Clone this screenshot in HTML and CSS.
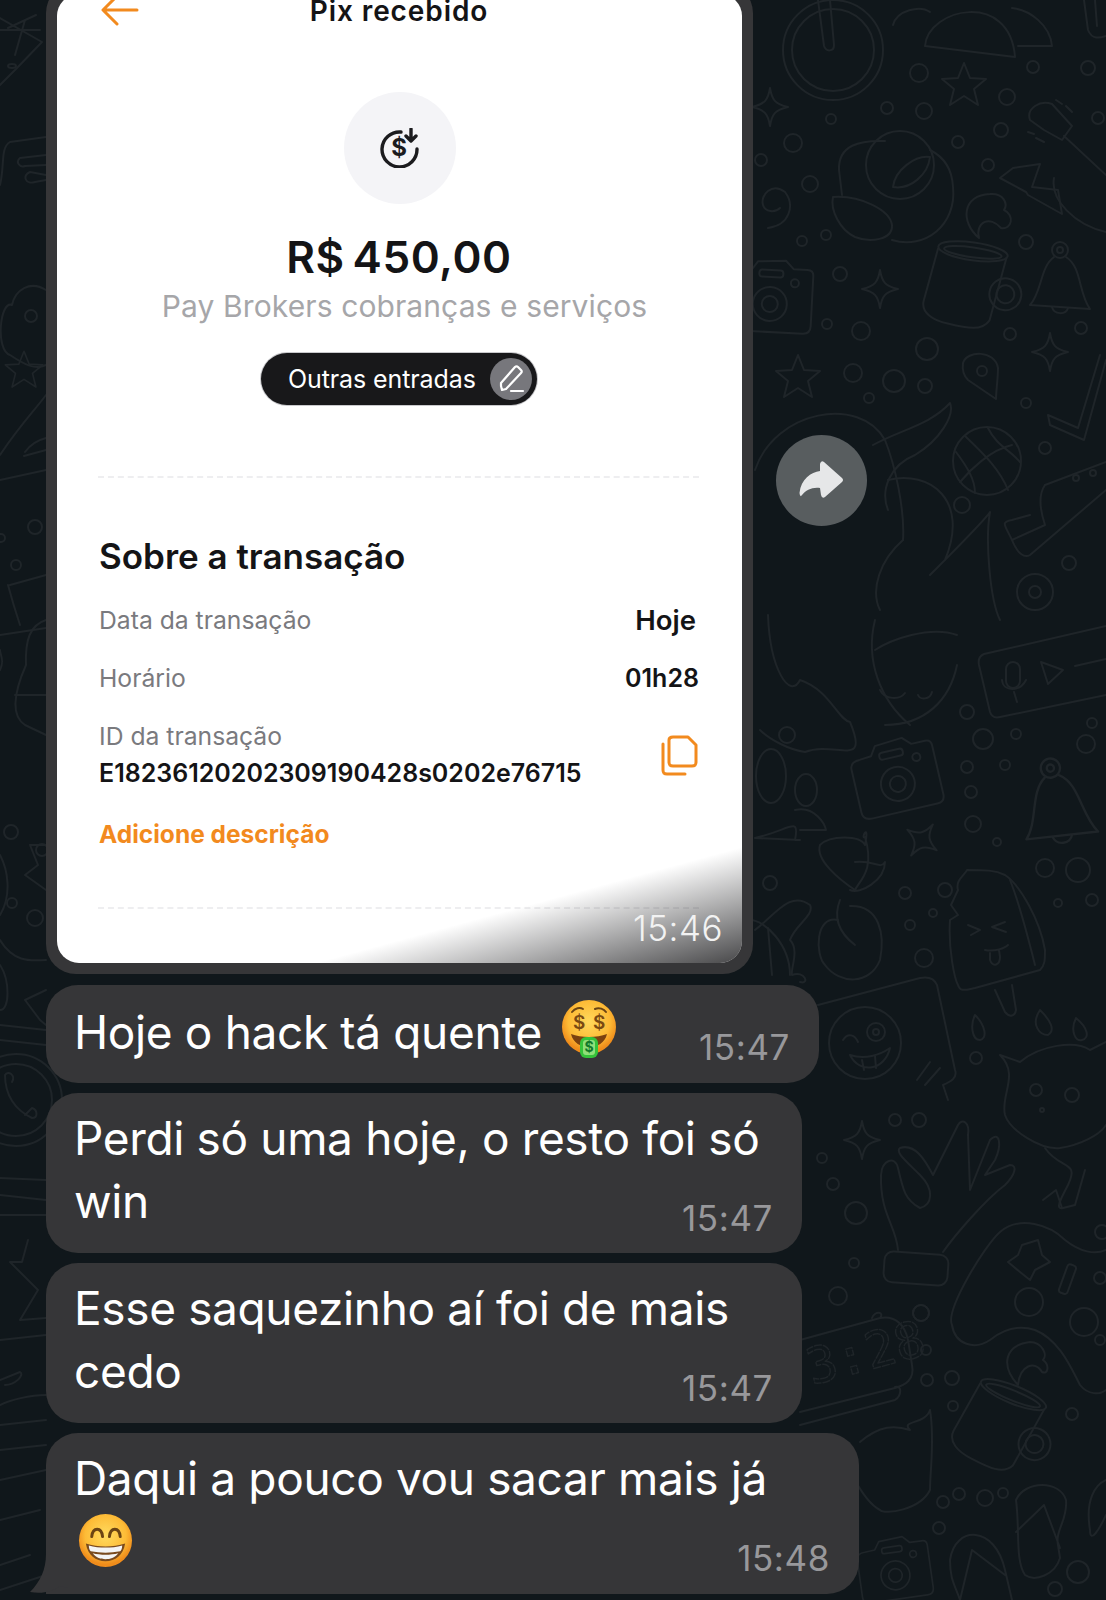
FILE: index.html
```html
<!DOCTYPE html>
<html>
<head>
  <title>Conversa</title>
  <link rel="stylesheet" href="styles.css">
</head>
<body>

  <!-- wallpaper doodles -->
  <svg class="wallpaper" viewBox="0 0 1106 1600" width="1106" height="1600">
    <defs>
      <path id="spark" d="M0 -19C2 -7 5 -3 18 0C5 3 2 7 0 19C-2 7 -5 3 -18 0C-5 -3 -2 -7 0 -19Z"/>
      <path id="star" d="M0 -22L6 -7L22 -6L10 4L14 20L0 11L-14 20L-10 4L-22 -6L-6 -7Z"/>
      <g id="mug">
        <ellipse cx="0" cy="-36" rx="35" ry="9"/>
        <ellipse cx="0" cy="-35" rx="29" ry="5"/>
        <path d="M-35 -34L-42 20C-43 32 -30 38 -15 39C5 41 20 42 26 30L34 -34"/>
        <circle cx="38" cy="2" r="16"/>
        <circle cx="38" cy="2" r="9"/>
      </g>
      <g id="bell">
        <circle cx="0" cy="-27" r="8"/>
        <circle cx="0" cy="-27" r="3"/>
        <path d="M-6 -20C-20 -10 -18 15 -30 28L30 32C18 15 22 -10 6 -20"/>
        <path d="M-8 30C-6 38 6 38 8 31"/>
      </g>
      <g id="camera">
        <path d="M-42 -20C-42 -26 -38 -28 -32 -28L-20 -29L-14 -38L14 -40L22 -32L36 -32C40 -32 42 -30 42 -26L42 24C42 30 38 32 34 32L-32 32C-38 32 -42 30 -42 24Z"/>
        <circle cx="0" cy="4" r="17"/>
        <circle cx="0" cy="4" r="8"/>
        <rect x="-12" y="-30" width="24" height="7" rx="3"/>
        <circle cx="24" cy="-18" r="4"/>
      </g>
    </defs>
    <g class="doodles">
      <!-- bike wheel and burger -->
      <circle cx="833" cy="50" r="50"/><circle cx="833" cy="50" r="41"/>
      <path d="M818 0L824 46C826 52 834 52 834 45L830 0"/>
      <path d="M925 46C928 8 1010 -10 1015 57L925 46"/>
      <path d="M893 25C897 10 920 5 930 12M1012 8C1030 10 1050 25 1052 46L1018 46"/>
      <path d="M1084 0L1088 30C1092 40 1100 38 1106 36M1095 0L1097 26"/>
      <circle cx="919" cy="73" r="9"/><circle cx="1007" cy="97" r="8"/><circle cx="1033" cy="67" r="6"/>
      <circle cx="1088" cy="68" r="7"/><circle cx="887" cy="108" r="6"/><circle cx="924" cy="111" r="8"/>
      <circle cx="831" cy="119" r="5"/><circle cx="793" cy="143" r="9"/><circle cx="1001" cy="130" r="7"/>
      <circle cx="958" cy="142" r="6"/><circle cx="988" cy="165" r="6"/><circle cx="810" cy="184" r="8"/>
      <circle cx="1098" cy="118" r="6"/><circle cx="802" cy="241" r="5"/><circle cx="826" cy="235" r="5"/>
      <circle cx="840" cy="274" r="7"/><circle cx="1026" cy="242" r="7"/><circle cx="861" cy="331" r="9"/>
      <circle cx="827" cy="324" r="5"/><circle cx="927" cy="349" r="11"/><circle cx="1010" cy="334" r="6"/>
      <circle cx="1081" cy="328" r="6"/><circle cx="853" cy="373" r="9"/><circle cx="894" cy="381" r="11"/>
      <circle cx="925" cy="386" r="7"/><circle cx="869" cy="398" r="5"/><circle cx="1026" cy="403" r="5"/>
      <circle cx="1045" cy="448" r="6"/><circle cx="962" cy="505" r="8"/><circle cx="1069" cy="563" r="7"/>
      <circle cx="761" cy="160" r="6"/>
      <use href="#spark" x="770" y="107"/><use href="#star" x="964" y="85"/>
      <use href="#spark" x="880" y="289"/><use href="#spark" x="1050" y="352"/><use href="#star" x="798" y="377"/>
      <!-- rose -->
      <circle cx="900" cy="165" r="34"/>
      <path d="M885 141C860 140 838 145 839 170L842 195M892 240C925 250 957 225 953 187C952 165 940 155 930 150"/>
      <path d="M893 187C895 170 915 155 930 157C928 175 910 190 893 187"/>
      <path d="M833 197C860 195 890 210 892 225C893 240 870 243 855 237C840 230 830 210 833 197"/>
      <path d="M768 228C790 225 795 205 785 192C772 182 760 195 763 205C765 212 775 213 780 208"/>
      <!-- cashew, bolt, brush -->
      <path d="M979 238C960 222 962 195 990 194C1004 193 1008 204 1004 210C1015 215 1012 230 1001 228C990 215 975 222 979 238"/>
      <path d="M1013 168L1040 164L1032 187L1058 190L1062 214L1028 195L1026 192L1000 178Z"/>
      <path d="M1030 120C1026 108 1040 100 1052 104L1072 126L1062 140L1044 130ZM1064 136L1106 175M1054 178C1050 200 1075 225 1106 232"/>
      <path d="M1056 100L1062 104M1066 106L1072 112M1028 132L1034 134M1036 138L1044 142"/>
      <use href="#mug" transform="translate(968 287) rotate(8)"/>
      <use href="#bell" transform="translate(1060 277)"/>
      <use href="#camera" transform="translate(770 300) rotate(3)"/>
      <!-- pin, hockey stick, ball -->
      <path d="M963 363C967 350 995 350 998 368C998 378 996 392 996 399L968 380C964 376 962 370 963 363Z"/><circle cx="982" cy="371" r="5"/>
      <path d="M1106 360L1084 440L1050 425L1048 415L1078 428L1100 355"/>
      <circle cx="987" cy="461" r="34"/>
      <path d="M965 436C985 455 1000 470 1008 490M1012 445C990 450 970 470 960 482M988 428C996 445 1010 450 1020 462M956 452C968 468 975 480 975 493"/>
      <path d="M1045 485L1106 462M1106 490L1030 555C1025 558 1018 555 1012 540L1045 525C1040 510 1038 495 1045 485M1012 540C1005 525 1000 522 1012 520L1030 515"/>
      <circle cx="1076" cy="478" r="3"/><circle cx="1093" cy="473" r="3"/>
      <!-- big blob -->
      <path d="M755 470C775 410 860 395 885 440C895 465 905 510 903 540"/>
      <path d="M873 445C900 430 930 425 950 403C955 415 940 440 915 455C890 465 880 490 888 510"/>
      <path d="M888 480C930 470 970 500 945 560M903 540C880 560 870 590 880 610M930 575C945 560 985 520 990 512C985 540 990 600 1000 620"/>
      <circle cx="1035" cy="592" r="18"/><circle cx="1035" cy="592" r="6"/>
      <path d="M768 615C770 670 790 700 800 680C830 690 838 720 850 722C870 770 835 740 805 752C790 750 770 740 760 730"/>
      <path d="M875 620C865 660 880 700 910 725M875 650C890 640 930 625 957 635"/>
      <path d="M957 665C950 700 925 725 885 725M880 690C885 700 900 700 905 693M918 695C920 700 930 700 932 692"/>
      <!-- voice message -->
      <path d="M1106 626L984 654C979 656 978 660 979 665L990 712C992 718 996 718 1000 717L1106 695"/>
      <rect x="1006" y="662" width="14" height="26" rx="7"/>
      <path d="M1002 680C1003 692 1020 692 1026 680M1014 692L1017 702"/>
      <path d="M1041 662L1063 670L1048 684Z"/><path d="M1075 666L1106 659"/>
      <circle cx="967" cy="712" r="7"/><circle cx="983" cy="739" r="10"/><circle cx="1016" cy="734" r="5"/>
      <circle cx="1092" cy="723" r="5"/><circle cx="1086" cy="744" r="9"/><circle cx="967" cy="767" r="6"/>
      <circle cx="1005" cy="765" r="5"/><circle cx="971" cy="792" r="6"/><circle cx="973" cy="824" r="8"/>
      <circle cx="997" cy="842" r="4"/><circle cx="787" cy="735" r="8"/><circle cx="1045" cy="868" r="9"/>
      <circle cx="1078" cy="870" r="12"/><circle cx="1058" cy="903" r="4"/><circle cx="1092" cy="900" r="6"/>
      <circle cx="905" cy="893" r="6"/><circle cx="945" cy="890" r="7"/><circle cx="933" cy="913" r="4"/>
      <circle cx="910" cy="925" r="5"/><circle cx="924" cy="958" r="9"/><circle cx="770" cy="883" r="7"/>
      <use href="#camera" transform="translate(897 780) rotate(-13)"/>
      <use href="#bell" transform="translate(1056 800) rotate(-10) scale(1.2)"/>
      <use href="#spark" transform="translate(922 840) rotate(35)"/>
      <!-- people -->
      <ellipse cx="771" cy="776" rx="15" ry="27"/><ellipse cx="806" cy="790" rx="11" ry="16"/>
      <path d="M755 838C790 830 800 815 795 840L800 840M755 838L800 840M795 810C815 805 825 825 826 830L800 830"/>
      <!-- cherry -->
      <path d="M855 890C840 880 815 860 820 845C830 835 860 835 865 845C870 820 860 840 865 837C875 870 860 880 855 890ZM855 862C875 860 880 870 885 862C885 880 860 895 850 890"/>
      <path d="M840 900C832 920 842 935 855 945"/>
      <path d="M838 920C815 915 815 955 825 965C840 985 870 985 880 960C885 935 880 905 850 906"/>
      <!-- turtle -->
      <path d="M755 930C775 915 790 890 810 905C815 915 795 925 790 940C800 950 790 970 792 975C805 970 810 985 800 982"/>
      <path d="M750 920C765 920 790 945 790 975M768 928L772 975"/>
      <!-- popsicle -->
      <path d="M967 870C965 875 955 880 958 890L951 905L958 915L950 920C948 950 955 980 958 985C960 992 965 990 975 988L1040 970C1045 965 1045 960 1045 950C1040 920 1020 885 1005 875C995 870 985 870 967 870Z"/>
      <path d="M1010 880C1020 905 1030 945 1035 965M995 990L1005 1012C1010 1018 1015 1016 1016 1010L1012 985"/>
      <path d="M968 925L980 930L971 935M1005 922L992 927L1006 932M985 950C995 952 1005 948 1008 945M990 953L990 960C993 968 1000 965 1000 957L999 950"/>
      <!-- drops -->
      <path d="M975 1015C970 1025 972 1040 980 1040C988 1038 985 1025 975 1015ZM1040 1010C1030 1025 1040 1035 1048 1035C1056 1030 1050 1020 1040 1010ZM1076 1018C1070 1030 1075 1042 1082 1040C1090 1038 1088 1028 1076 1018Z"/>
      <circle cx="976" cy="1058" r="6"/>
      <!-- wink card -->
      <path d="M818 1005L920 978C930 976 935 980 937 985L955 1070C958 1078 950 1082 943 1085L948 1100"/>
      <circle cx="865" cy="1043" r="36"/>
      <circle cx="876" cy="1032" r="9"/><circle cx="876" cy="1032" r="3"/>
      <path d="M843 1040C848 1032 855 1035 858 1042M850 1055C865 1060 880 1055 890 1048C885 1070 860 1075 850 1055M862 1060L864 1070M875 1056L876 1068"/>
      <path d="M917 1080L930 1062M925 1085L940 1068"/>
      <!-- cat -->
      <path d="M1000 1055L1020 1062C1040 1045 1075 1040 1090 1050L1106 1042M1000 1055C1020 1075 1000 1095 1005 1115C1010 1130 1040 1150 1060 1148C1080 1145 1100 1135 1106 1125"/>
      <circle cx="1042" cy="1110" r="2"/><circle cx="1072" cy="1095" r="7"/><circle cx="1036" cy="1090" r="6"/>
      <path d="M1045 1148C1060 1170 1080 1160 1068 1185C1060 1200 1055 1210 1063 1208L1075 1205L1085 1170"/>
      <path d="M1043 1200L1056 1190L1062 1208"/>
      <!-- hand -->
      <use href="#spark" x="862" y="1140"/>
      <circle cx="895" cy="1120" r="6"/><circle cx="919" cy="1120" r="7"/><circle cx="822" cy="1158" r="5"/>
      <circle cx="833" cy="1184" r="6"/><circle cx="856" cy="1213" r="11"/><circle cx="854" cy="1263" r="5"/>
      <circle cx="838" cy="1296" r="9"/><circle cx="921" cy="1313" r="8"/>
      <rect x="884" y="1253" width="64" height="31" rx="9" transform="rotate(4 916 1268)"/>
      <path d="M898 1250C896 1225 880 1215 881 1175C882 1160 895 1155 898 1168C903 1190 905 1200 920 1208C932 1205 935 1190 920 1175C905 1160 895 1152 900 1148C915 1143 925 1160 933 1175L958 1125C962 1118 970 1122 968 1135L970 1190L990 1140C1000 1130 1002 1145 995 1160L985 1175L1010 1165C1018 1165 1015 1175 1005 1185C985 1200 955 1235 943 1252"/>
      <!-- gamepad -->
      <path d="M952 1325C945 1310 985 1245 1000 1232C1020 1215 1050 1225 1065 1240C1080 1252 1095 1255 1106 1250M952 1325C955 1345 975 1350 990 1340C1005 1328 1020 1325 1035 1330C1060 1340 1072 1370 1080 1385C1088 1395 1100 1395 1106 1390"/>
      <path d="M1022 1245L1038 1240L1042 1255L1050 1262L1035 1270L1030 1280L1020 1272L1008 1262L1018 1255Z"/>
      <rect x="1063" y="1264" width="9" height="30" rx="3" transform="rotate(20 1067 1279)"/>
      <circle cx="1029" cy="1302" r="14"/><circle cx="1084" cy="1322" r="14"/><circle cx="1100" cy="1278" r="6"/>
      <circle cx="1102" cy="1232" r="7"/>
      <path d="M1018 1385C1000 1365 1005 1345 1030 1342C1042 1342 1048 1355 1043 1360C1050 1365 1048 1375 1042 1372C1035 1360 1020 1365 1018 1385"/>
      <!-- clock -->
      <path d="M800 1340L880 1318C895 1315 905 1325 908 1340L912 1365C915 1380 905 1385 895 1388L800 1412M800 1425L895 1400C902 1395 902 1385 895 1387M872 1318C875 1310 885 1312 880 1318"/>
      <text class="clock" x="812" y="1385" transform="rotate(-15 812 1385)">3:28</text>
      <circle cx="921" cy="1313" r="8"/><circle cx="926" cy="1350" r="5"/><circle cx="927" cy="1380" r="6"/><circle cx="952" cy="1378" r="7"/>
      <circle cx="953" cy="1406" r="5"/><circle cx="1072" cy="1414" r="6"/><circle cx="1100" cy="1340" r="5"/>
      <use href="#mug" transform="translate(1000 1428) rotate(22)"/>
      <!-- shell -->
      <path d="M860 1442C880 1425 895 1425 910 1430C900 1420 925 1425 930 1410C935 1440 930 1470 930 1490C920 1510 885 1515 880 1510C870 1505 860 1490 852 1475"/>
      <circle cx="959" cy="1494" r="6"/><circle cx="985" cy="1498" r="8"/><circle cx="1003" cy="1493" r="5"/><circle cx="943" cy="1502" r="6"/>
      <circle cx="939" cy="1528" r="6"/><circle cx="1078" cy="1572" r="11"/><circle cx="1055" cy="1589" r="7"/>
      <use href="#camera" transform="translate(895 1572) rotate(-8) scale(.85)"/>
      <!-- flip flops -->
      <path d="M1016 1500C1025 1480 1060 1480 1066 1500C1068 1520 1055 1530 1058 1545L1060 1558C1055 1575 1035 1582 1025 1575C1015 1560 1020 1530 1016 1500ZM1016 1532L1044 1505L1060 1548"/>
      <path d="M950 1560C955 1525 995 1525 1005 1570L1012 1600M960 1600C955 1585 950 1580 950 1560M960 1600L972 1550L1005 1575"/>
      <path d="M1090 1530C1085 1500 1095 1485 1106 1480M1090 1530C1090 1545 1100 1528 1106 1515"/>
      <!-- left edge -->
      <path d="M0 18L42 42L15 70L0 85M8 28L36 15M15 55L25 20M0 30L40 30"/>
      <ellipse cx="12" cy="66" rx="4" ry="2"/>
      <path d="M46 137L10 142C0 148 5 165 0 185M46 155L20 158C15 162 20 168 25 166L46 165M46 175L30 172C22 175 25 185 35 182L46 180"/>
      <path d="M46 290C30 280 15 290 12 305C0 300 -5 350 10 355C25 365 35 370 46 365"/>
      <circle cx="31" cy="316" r="6"/><use href="#star" transform="translate(24 370) scale(.85)"/>
      <path d="M0 455C20 425 35 410 46 395M0 480L46 470M24 456L46 450M25 452C30 445 38 440 46 438"/>
      <circle cx="35" cy="527" r="7"/><circle cx="16" cy="565" r="5"/><circle cx="1" cy="538" r="4"/>
      <path d="M0 635L46 628M10 585L46 575M20 625C15 610 12 600 8 585M0 670C5 660 0 655 0 650"/>
      <path d="M46 620C30 625 25 640 26 665C15 690 10 715 25 725L46 735M46 695L15 695"/>
      <circle cx="11" cy="832" r="7"/><circle cx="42" cy="850" r="6"/><circle cx="12" cy="903" r="5"/><circle cx="35" cy="918" r="8"/>
      <path d="M0 855C8 870 12 895 0 915M46 890L25 875L38 865L30 845L46 845"/>
      <path d="M0 940C15 965 35 960 46 960M0 965C10 980 10 1010 0 1010M46 990L25 1000L40 1020L46 1025"/>
      <path d="M0 1025L46 1030M0 1040L46 1045"/>
      <circle cx="16" cy="1100" r="46"/><circle cx="16" cy="1100" r="36"/>
      <path d="M5 1075C5 1095 15 1110 32 1118C38 1118 38 1110 32 1108L25 1115M5 1075C8 1070 16 1075 12 1082"/>
      <path d="M0 1178L46 1180M0 1195L46 1200M0 1215L46 1215M28 1240L22 1262L10 1262L38 1290L20 1320L46 1318"/>
      <path d="M0 1340L46 1335M0 1380L20 1372C25 1375 15 1385 5 1385M0 1405C10 1400 30 1395 46 1395M0 1425L46 1420M0 1450L46 1445M0 1480L46 1470M0 1520L40 1510"/>
      <path d="M0 1565L30 1555M0 1590L46 1575"/>
    </g>
  </svg>

  <div class="chat">

    <div class="photo-bubble">
      <div class="receipt">
        <div class="receipt-head">
          <svg class="back-arrow" viewBox="0 0 38 32" width="38" height="32">
            <path d="M36 15H3M16 1L2 15L16 29"/>
          </svg>
          <span class="receipt-title">Pix recebido</span>
        </div>

        <div class="receipt-top">
          <div class="coin-circle">
            <svg class="coin-icon" viewBox="0 0 40 40" width="40" height="40">
              <path class="coin-ring" d="M21 4A17.5 17.5 0 1 0 37 21"/>
              <text class="coin-sign" x="19" y="28">$</text>
              <path class="coin-ring" d="M31 1V12M26 8L31 13L36 8"/>
            </svg>
          </div>
          <div class="amount">R$ 450,00</div>
          <div class="payer">Pay Brokers cobranças e serviços</div>
          <div class="category">
            <span>Outras entradas</span>
            <span class="category-edit">
              <svg viewBox="0 0 28 28" width="28" height="28">
                <path d="M4 21L5 25L9 24L24 8C25 7 25 6 24 5L21 2C20 1 19 1 18 2L4 18ZM14 26H26"/>
              </svg>
            </span>
          </div>
        </div>

        <div class="dashes dashes-top"></div>

        <h2 class="section-title">Sobre a transação</h2>
        <div class="info-row">
          <span class="info-label">Data da transação</span>
          <span class="info-value info-today">Hoje</span>
        </div>
        <div class="info-row">
          <span class="info-label">Horário</span>
          <span class="info-value">01h28</span>
        </div>
        <div class="info-id">
          <div>
            <div class="info-label">ID da transação</div>
            <div class="info-value id-value">E18236120202309190428s0202e76715</div>
          </div>
          <svg class="copy-icon" viewBox="0 0 38 42" width="38" height="42">
            <path d="M12 3H27L35 11V28C35 31 34 32 31 32H12C9 32 8 31 8 28V6C8 4 9 3 12 3Z"/>
            <path d="M2 10V36C2 39 3 40 6 40H24"/>
          </svg>
        </div>
        <div class="add-note">Adicione descrição</div>
        <div class="dashes dashes-bottom"></div>

        <div class="photo-shade"></div>
        <span class="photo-time">15:46</span>
      </div>
    </div>

    <div class="msg msg-first">
      <span>Hoje o hack tá quente</span>
      <svg class="emoji emoji-money" viewBox="0 0 56 60" width="56" height="60">
        <defs>
          <radialGradient id="faceA" cx="50%" cy="40%" r="55%">
            <stop offset="0" stop-color="#ffd95c"/><stop offset=".7" stop-color="#fdbb36"/><stop offset="1" stop-color="#ef8c1b"/>
          </radialGradient>
        </defs>
        <circle cx="28" cy="28" r="27" fill="url(#faceA)"/>
        <path d="M11 13C14 9 19 8 22 10M34 10C38 8 43 10 45 13" fill="none" stroke="#6b4413" stroke-width="2" stroke-linecap="round"/>
        <text class="emoji-dollar" x="18" y="30">$</text>
        <text class="emoji-dollar" x="38" y="30">$</text>
        <path d="M10 35C20 39 36 39 46 35C44 44 36 48 28 48C20 48 12 44 10 35Z" fill="#7a4110"/>
        <rect x="19" y="38" width="18" height="21" rx="6" fill="#35c33a"/>
        <rect x="22" y="41" width="12" height="15" rx="3" fill="#8fe07a"/>
        <text class="emoji-bill" x="28" y="53">$</text>
      </svg>
      <span class="time">15:47</span>
    </div>

    <div class="msg msg-mid">
      Perdi só uma hoje, o resto foi só<br>win<span class="time">15:47</span>
    </div>

    <div class="msg msg-mid">
      Esse saquezinho aí foi de mais<br>cedo<span class="time">15:47</span>
    </div>

    <div class="msg msg-last">
      Daqui a pouco vou sacar mais já<br>
      <svg class="emoji emoji-grin" viewBox="0 0 56 56" width="55" height="55">
        <defs>
          <radialGradient id="faceB" cx="50%" cy="40%" r="55%">
            <stop offset="0" stop-color="#ffdb5f"/><stop offset=".7" stop-color="#fdbb36"/><stop offset="1" stop-color="#ef8c1b"/>
          </radialGradient>
        </defs>
        <circle cx="28" cy="28" r="27" fill="url(#faceB)"/>
        <path d="M14 24C15 14 24 14 25 24M32 24C33 14 42 14 43 24" fill="none" stroke="#6b4413" stroke-width="3" stroke-linecap="round"/>
        <path d="M8 31C20 35 36 35 48 31C46 43 38 49 28 49C18 49 10 43 8 31Z" fill="#7a4a1c"/>
        <path d="M11 33C22 36 34 36 45 33C45 36 44 38 43 39C33 41 23 41 13 39C12 38 11 36 11 33Z" fill="#f4f4f4"/>
        <path d="M15 41C23 43 33 43 41 41C37 46 33 47 28 47C23 47 19 46 15 41Z" fill="#f4f4f4"/>
      </svg>
      <span class="time">15:48</span>
      <svg class="msg-tail" viewBox="0 0 40 40" width="40" height="40">
        <path d="M18 0C18 16 12 28 2 38C14 40 24 38 32 32L40 34L40 0Z"/>
      </svg>
    </div>
  </div>

  <button class="forward" type="button" aria-label="Encaminhar">
    <svg viewBox="0 0 91 91" width="91" height="91">
      <path d="M48 27L66 43Q68 45 66 47L49 62Q46 64 45 60L44 53C36 52 30 55 26 60Q24 63 23.5 58C25 44 35 37 44 36L44 29Q45 25 48 27Z"/>
    </svg>
  </button>

</body>
</html>
```

FILE: styles.css
```css
html, body {
  margin: 0;
  height: 1600px;
  overflow: hidden;
}

body {
  position: relative;
  background: #10171b;
  font-family: Inter, "Liberation Sans", sans-serif;
}

.wallpaper {
  position: absolute;
  left: 0;
  top: 0;
}

.doodles {
  fill: none;
  stroke: #1f2529;
  stroke-width: 2;
  stroke-linecap: round;
  stroke-linejoin: round;
}

.clock {
  font-family: "DejaVu Sans Mono", monospace;
  font-size: 50px;
  fill: none;
  stroke-dasharray: 7 2;
  stroke-width: 1.5;
}

.chat {
  position: relative;
  padding-left: 46px;
  display: flex;
  flex-direction: column;
  align-items: flex-start;
  gap: 10px;
}

/* photo message */
.photo-bubble {
  margin-top: -17px;
  width: 707px;
  height: 991px;
  box-sizing: border-box;
  padding: 11px;
  background: #363638;
  border-radius: 30px;
}

.receipt {
  position: relative;
  height: 969px;
  box-sizing: border-box;
  padding: 0 43px 0 42px;
  background: #fff;
  border-radius: 22px;
  overflow: hidden;
  color: #141416;
}

.receipt-head {
  display: grid;
  grid-template-columns: 1fr auto 1fr;
  align-items: center;
  height: 34px;
}

.receipt-title {
  grid-column: 2;
  grid-row: 1;
  font-size: 28px;
  font-weight: 600;
  line-height: 34px;
  letter-spacing: .9px;
}

.back-arrow {
  grid-column: 1;
  grid-row: 1;
  margin: 0 0 0 2px;
  fill: none;
  stroke: #f28a1e;
  stroke-width: 3;
  stroke-linecap: round;
  stroke-linejoin: round;
}

.receipt-top {
  display: flex;
  flex-direction: column;
  align-items: center;
}

.coin-circle {
  display: flex;
  align-items: center;
  justify-content: center;
  width: 112px;
  height: 112px;
  margin: 64px 0 0 1px;
  border-radius: 50%;
  background: #f4f4f7;
}

.coin-ring {
  fill: none;
  stroke: #1b1b1e;
  stroke-width: 3.4;
  stroke-linecap: round;
  stroke-linejoin: round;
}

.coin-sign {
  font-family: Inter, sans-serif;
  font-size: 24px;
  font-weight: 700;
  fill: #1b1b1e;
  text-anchor: middle;
}

.amount {
  margin-top: 28px;
  font-size: 44px;
  font-weight: 600;
  line-height: 50px;
  letter-spacing: .6px;
  word-spacing: -4px;
}

.payer {
  margin: 6px 0 0 11px;
  font-size: 30px;
  line-height: 36px;
  letter-spacing: .1px;
  color: #a6a6a9;
}

.category {
  display: flex;
  align-items: center;
  justify-content: space-between;
  box-sizing: border-box;
  width: 276px;
  height: 52px;
  margin-top: 29px;
  padding: 0 5px 0 27px;
  border-radius: 26px;
  background: #18181a;
  box-shadow: 0 0 0 1px #c9c9cc;
  color: #fff;
  font-size: 25px;
  letter-spacing: -.1px;
}

.category-edit {
  display: flex;
  align-items: center;
  justify-content: center;
  width: 42px;
  height: 42px;
  border-radius: 50%;
  background: #77777c;
}

.category-edit svg {
  fill: none;
  stroke: #fff;
  stroke-width: 2.2;
  stroke-linecap: round;
  stroke-linejoin: round;
}

.dashes {
  border-top: 2px dashed #eeeef0;
}

.dashes-top {
  margin: 71px 0 0 -1px;
}

.section-title {
  margin: 58px 0 0;
  font-size: 35px;
  font-weight: 600;
  line-height: 40px;
}

.info-row {
  display: flex;
  justify-content: space-between;
  line-height: 30px;
  margin-bottom: 28px;
}

.section-title + .info-row {
  margin-top: 28.5px;
}

.info-label {
  font-size: 24.7px;
  line-height: 30px;
  color: #7a7a7e;
}

.info-value {
  font-size: 25px;
  font-weight: 600;
  line-height: 30px;
}

.info-today {
  margin-right: 3px;
  font-size: 27.5px;
}

.info-id {
  display: flex;
  justify-content: space-between;
  align-items: flex-start;
}

.id-value {
  margin-top: 7px;
}

.copy-icon {
  margin: 13px 0 0 0;
  fill: none;
  stroke: #f28a1e;
  stroke-width: 3;
  stroke-linejoin: round;
  stroke-linecap: round;
}

.add-note {
  margin-top: 31px;
  font-size: 24.5px;
  font-weight: 700;
  line-height: 30px;
  color: #f28a1e;
}

.dashes-bottom {
  margin: 58px 0 0 -1px;
}

.photo-shade {
  position: absolute;
  right: 0;
  bottom: 0;
  width: 427px;
  height: 116px;
  background: linear-gradient(to bottom right, rgba(40, 40, 42, 0) 50%, rgba(40, 40, 42, .85) 100%);
}

.photo-time {
  position: absolute;
  right: 19px;
  bottom: 14px;
  font-size: 35px;
  line-height: 42px;
  font-weight: 300;
  letter-spacing: .5px;
  color: #f2f2f2;
}

/* text messages */
.msg {
  position: relative;
  box-sizing: border-box;
  padding: 14px 29px 0 28px;
  background: #363638;
  border-radius: 32px;
  color: #fff;
  font-size: 46px;
  line-height: 63px;
  letter-spacing: -.36px;
}

.msg-first {
  margin-top: 1px;
  width: 773px;
  height: 98px;
}

.msg-mid {
  width: 756px;
  height: 160px;
}

.msg-last {
  width: 813px;
  height: 161px;
  border-bottom-left-radius: 0;
}

.time {
  float: right;
  margin-top: 28px;
  font-size: 35px;
  line-height: 40px;
  letter-spacing: .6px;
  color: #98989b;
}

.emoji {
  vertical-align: -10px;
}

.emoji-money {
  margin-left: 6px;
}

.emoji-grin {
  margin-left: 4px;
}

.emoji-dollar {
  font-family: Inter, sans-serif;
  font-size: 19px;
  font-weight: 600;
  fill: #7a4a12;
  text-anchor: middle;
}

.emoji-bill {
  font-family: Inter, sans-serif;
  font-size: 14px;
  font-weight: 700;
  fill: #127a2a;
  text-anchor: middle;
}

.msg-tail {
  position: absolute;
  left: -18px;
  bottom: 0;
  fill: #363638;
}

.forward {
  position: absolute;
  left: 776px;
  top: 435px;
  width: 91px;
  height: 91px;
  padding: 0;
  border: 0;
  border-radius: 50%;
  background: rgba(255, 255, 255, .3);
}

.forward svg {
  display: block;
  fill: #e6e7e8;
}
```
